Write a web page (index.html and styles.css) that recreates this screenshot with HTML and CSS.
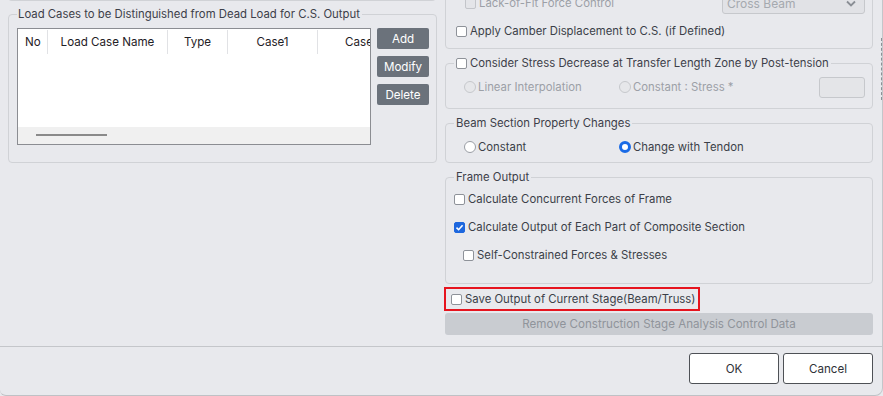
FILE: index.html
```html
<!DOCTYPE html>
<html lang="en">
<head>
    <meta charset="UTF-8">
    <title>Construction Stage Analysis Control Data</title>
    <link rel="stylesheet" href="styles.css">
</head>
<body>
    <div class="dialog">
        <div class="main">
            <!-- left column -->
            <div class="col">
                <div class="tail"></div>
                <fieldset class="group lc-group">
                    <legend>Load Cases to be Distinguished from Dead Load for C.S. Output</legend>
                    <div class="lc-body">
                        <div class="grid">
                            <div class="grid-head">
                                <div class="th w-no">No</div>
                                <div class="th w-name">Load Case Name</div>
                                <div class="th w-type">Type</div>
                                <div class="th w-case">Case1</div>
                                <div class="th w-case">Case2</div>
                            </div>
                            <div class="grid-rows"></div>
                            <div class="hscroll"><span class="thumb"></span></div>
                        </div>
                        <div class="side-btns">
                            <button class="btn-dark">Add</button>
                            <button class="btn-dark">Modify</button>
                            <button class="btn-dark">Delete</button>
                        </div>
                    </div>
                </fieldset>
            </div>

            <!-- right column -->
            <div class="col">
                <div class="prevbox">
                    <div class="row indent off">
                        <span class="cb dis"></span>Lack-of-Fit Force Control
                        <div class="select">Cross Beam
                            <svg class="chev" width="10" height="7" viewBox="0 0 10 7"><path d="M1 1.5 5 5.5 9 1.5" fill="none" stroke="#8a8e95" stroke-width="1.8"/></svg>
                        </div>
                    </div>
                    <div class="row"><span class="cb"></span>Apply Camber Displacement to C.S. (if Defined)</div>
                </div>

                <fieldset class="group stress-group">
                    <legend class="row"><span class="cb"></span>Consider Stress Decrease at Transfer Length Zone by Post-tension</legend>
                    <div class="row off pad-ind">
                        <span class="opt"><span class="rb dis"></span>Linear Interpolation</span>
                        <span class="opt"><span class="rb dis"></span>Constant : Stress *</span>
                        <span class="field"></span>
                    </div>
                </fieldset>

                <fieldset class="group beam-group">
                    <legend>Beam Section Property Changes</legend>
                    <div class="row pad-ind">
                        <span class="opt"><span class="rb"></span>Constant</span>
                        <span class="opt"><span class="rb on"></span>Change with Tendon</span>
                    </div>
                </fieldset>

                <fieldset class="group frame-group">
                    <legend>Frame Output</legend>
                    <div class="row first"><span class="cb"></span>Calculate Concurrent Forces of Frame</div>
                    <div class="row"><span class="cb on"><svg width="9" height="9" viewBox="0 0 9 9"><path d="M1.5 4.6 3.6 6.7 7.6 2.2" fill="none" stroke="#fff" stroke-width="1.6"/></svg></span>Calculate Output of Each Part of Composite Section</div>
                    <div class="row indent"><span class="cb"></span>Self-Constrained Forces &amp; Stresses</div>
                </fieldset>

                <div class="mark"><span class="cb"></span>Save Output of Current Stage(Beam/Truss)</div>
                <button class="btn-wide">Remove Construction Stage Analysis Control Data</button>
            </div>
            <div class="grip"></div>
        </div>
        <div class="footer">
            <button class="btn-light">OK</button>
            <button class="btn-light">Cancel</button>
        </div>
    </div>
</body>
</html>
```

FILE: styles.css
```css
*{
    margin: 0;
    padding: 0;
    box-sizing: border-box;
}
body{
    background: #e8e9ed;
    font-family: Inter, "Noto Sans", sans-serif;
    font-size: 11.35px;
    color: #3b3f48;
    overflow: hidden;
}
button{
    font-family: inherit;
    font-size: 11.6px;
    border: none;
    cursor: pointer;
}
.dialog{
    width: 883px;
    height: 396px;
    background: #e8e9ed;
    border-bottom: 1px solid #bfc1c5;
    border-right: 1px solid #c4c6ca;
    border-radius: 0 0 8px 6px;
    overflow: hidden;
}
.main{
    height: 347px;
    display: flex;
    gap: 9px;
    padding-left: 8px;
    border-bottom: 1px solid #c4c6ca;
    position: relative;
}
.col{
    width: 428px;
    display: flex;
    flex-direction: column;
    align-items: flex-start;
}

/* group boxes */
.group{
    width: 428px;
    border: 1px solid #d0d2d6;
    border-radius: 4px;
    padding: 0 7px 0 8px;
}
.group legend{
    padding: 0 2px;
    line-height: 16px;
    color: #3d4049;
}
.tail{
    width: 428px;
    height: 8px;
    margin-top: -7px;
    border: 1px solid #d0d2d6;
    border-top: none;
    border-radius: 0 0 4px 4px;
}
.lc-group{
    margin-top: 5px;
    padding-bottom: 17px;
}
.lc-group legend{
    padding: 0 2px 0 1px;
}
.lc-body{
    display: flex;
    gap: 6px;
    padding-top: 6px;
}

/* table */
.grid{
    width: 354px;
    height: 117px;
    border: 1px solid #8b8d92;
    background: #fff;
    overflow: hidden;
    display: flex;
    flex-direction: column;
}
.grid-head{
    display: flex;
    height: 25px;
    padding-top: 1px;
    flex-shrink: 0;
}
.th{
    flex-shrink: 0;
    text-align: center;
    line-height: 24px;
    color: #1f2126;
    font-size: 11.6px;
    border-right: 1px solid #e1e2e5;
}
.w-no{ width: 30px; text-align: left; padding-left: 7px; }
.w-name{ width: 120px; }
.w-type{ width: 60px; }
.w-case{ width: 90px; }
.grid-rows{
    flex: 1;
}
.hscroll{
    height: 17px;
    background: #f0f0f0;
    position: relative;
}
.thumb{
    position: absolute;
    left: 18px;
    top: 7px;
    width: 71px;
    height: 2px;
    background: #8a8a8a;
}
.side-btns{
    display: flex;
    flex-direction: column;
    gap: 7px;
}
.btn-dark{
    width: 52px;
    height: 21px;
    background: #6b727b;
    color: #fff;
    border-radius: 2px;
}

/* right side rows */
.row{
    display: flex;
    align-items: center;
    height: 22px;
    gap: 3px;
    white-space: nowrap;
}
.indent{ padding-left: 9px; }
.off{ color: #9ca0a7; }
.prevbox{
    width: 428px;
    margin-top: -20px;
    border: 1px solid #d0d2d6;
    border-radius: 4px;
    padding: 11px 7px 6px 10px;
    display: flex;
    flex-direction: column;
    gap: 6px;
}
.select{
    margin-left: auto;
    width: 143px;
    height: 22px;
    border: 1px solid #c6c8cc;
    border-radius: 3px;
    background: #e1e2e6;
    color: #a5a9af;
    display: flex;
    align-items: center;
    padding: 0 8px 0 4px;
    font-size: 12px;
}
.chev{ margin-left: auto; }

.cb{
    width: 11px;
    height: 11px;
    border: 1px solid #8e9299;
    border-radius: 2px;
    background: #fff;
    flex-shrink: 0;
    display: flex;
    align-items: center;
    justify-content: center;
}
.cb.dis{
    border-color: #c3c5ca;
    background: #e4e5e9;
}
.cb.on{
    background: #1d67de;
    border-color: #1d67de;
}
.rb{
    width: 12px;
    height: 12px;
    border: 1px solid #9a9ea5;
    border-radius: 50%;
    background: #fff;
    flex-shrink: 0;
}
.rb.dis{
    border-color: #c6c8cc;
    background: #e6e7ea;
}
.rb.on{
    border: 3.5px solid #1a6be6;
}
.opt{
    display: flex;
    align-items: center;
    gap: 2px;
    width: 152px;
}
.pad-ind{ padding-left: 10px; }
.field{
    margin-left: auto;
    width: 46px;
    height: 21px;
    border: 1px solid #c6c8cc;
    border-radius: 3px;
    background: #e4e5e8;
}

.group + .group,
.prevbox + .group{
    margin-top: 6px;
}
.group legend.row{
    height: 16px;
}
.stress-group .row.pad-ind{
    margin: 5px 0 10px;
}
.beam-group .row.pad-ind{
    margin: 5px 0 4px;
}
.frame-group{
    padding-bottom: 17px;
    display: flex;
    flex-direction: column;
    gap: 6px;
}
.frame-group .first{
    margin-top: 3px;
}

.mark{
    display: flex;
    align-items: center;
    gap: 3px;
    margin: 3px 0 0 -1px;
    height: 24px;
    padding: 0 3px 0 5px;
    border: 2px solid #e6141e;
    white-space: nowrap;
}
.btn-wide{
    margin-top: 2px;
    width: 428px;
    height: 22px;
    background: #c9ccd1;
    color: #90949b;
    border-radius: 3px;
}
.grip{
    position: absolute;
    right: 0;
    top: 38px;
    height: 62px;
    border-right: 1px dashed #8d9096;
}

/* footer */
.footer{
    display: flex;
    justify-content: flex-end;
    gap: 4px;
    padding: 6px 9px 0 0;
}
.btn-light{
    width: 90px;
    height: 31px;
    background: #fff;
    border: 1px solid #4e5156;
    border-radius: 3px;
    color: #2f3238;
}
```
